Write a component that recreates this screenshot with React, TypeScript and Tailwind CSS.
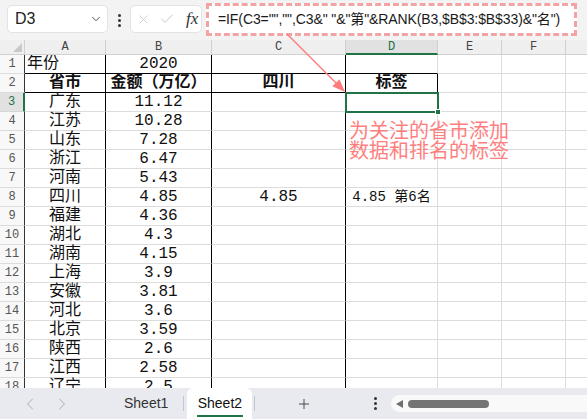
import React from 'react';
import { ChevronDown, ChevronLeft, ChevronRight, X, Check, Plus } from 'lucide-react';

const FORMULA = '=IF(C3="","",C3&" "&"第"&RANK(B3,$B$3:$B$33)&"名")';

type Row = {
  n: number;
  a?: string;
  b?: string;
  c?: string;
  d?: string;
  head?: boolean;
};

const rows: Row[] = [
  { n: 1, a: '年份', b: '2020' },
  { n: 2, a: '省市', b: '金额（万亿）', c: '四川', d: '标签', head: true },
  { n: 3, a: '广东', b: '11.12' },
  { n: 4, a: '江苏', b: '10.28' },
  { n: 5, a: '山东', b: '7.28' },
  { n: 6, a: '浙江', b: '6.47' },
  { n: 7, a: '河南', b: '5.43' },
  { n: 8, a: '四川', b: '4.85', c: '4.85', d: '4.85 第6名' },
  { n: 9, a: '福建', b: '4.36' },
  { n: 10, a: '湖北', b: '4.3' },
  { n: 11, a: '湖南', b: '4.15' },
  { n: 12, a: '上海', b: '3.9' },
  { n: 13, a: '安徽', b: '3.81' },
  { n: 14, a: '河北', b: '3.6' },
  { n: 15, a: '北京', b: '3.59' },
  { n: 16, a: '陕西', b: '2.6' },
  { n: 17, a: '江西', b: '2.58' },
  { n: 18, a: '辽宁', b: '2.5' },
];

type CellProps = {
  w: string;
  rb?: boolean;
  bb?: boolean;
  left?: boolean;
  bold?: boolean;
  extra?: string;
  children?: React.ReactNode;
};

const Cell = ({ w, rb, bb, left, bold, extra = '', children }: CellProps) => (
  <div
    className={`${w} shrink-0 h-full border-r border-b flex items-center whitespace-nowrap ${rb ? 'border-r-black' : 'border-r-[#dcdcdc]'} ${bb ? 'border-b-black' : 'border-b-[#dcdcdc]'} ${left ? 'justify-start pl-[2px]' : 'justify-center'} ${bold ? 'font-bold' : ''} ${extra}`}
  >
    {children}
  </div>
);

const colHeads = [
  { l: 'A', w: 'w-[81px]' },
  { l: 'B', w: 'w-[106px]' },
  { l: 'C', w: 'w-[134px]' },
  { l: 'D', w: 'w-[92px]' },
  { l: 'E', w: 'w-[64px]' },
  { l: 'F', w: 'w-[64px]' },
  { l: '', w: 'w-[64px]' },
];

const VDots = () => (
  <div className="flex flex-col items-center gap-[2px]">
    <span className="w-[3px] h-[3px] rounded-full bg-[#333]" />
    <span className="w-[3px] h-[3px] rounded-full bg-[#333]" />
    <span className="w-[3px] h-[3px] rounded-full bg-[#333]" />
  </div>
);

const App: React.FC = () => {
  return (
    <div className="w-[587px] h-[419px] relative overflow-hidden flex flex-col bg-white font-['Liberation_Mono','Noto_Sans_CJK_SC',monospace] text-[#111]">
      {/* formula bar */}
      <div className="h-[40px] shrink-0 bg-[#f3f3f3] flex items-start font-['Liberation_Sans','Noto_Sans_CJK_SC',sans-serif]">
        <div className="ml-[7px] mt-[5px] w-[101px] h-[28px] bg-white rounded-[5px] border border-[#e3e3e3] flex items-center justify-between pl-[7px] pr-[4px]">
          <span className="text-[16px] text-[#222]">D3</span>
          <ChevronDown size={14} strokeWidth={1.6} className="text-[#444]" />
        </div>
        <div className="w-[22px] mt-[14px] flex justify-center">
          <VDots />
        </div>
        <div className="mt-[5px] w-[72px] h-[28px] bg-white rounded-[5px] border border-[#e3e3e3] flex items-center pl-[5px] gap-[8px]">
          <X size={15} strokeWidth={1.2} className="text-[#c4c4c4]" />
          <Check size={16} strokeWidth={1.2} className="text-[#b8b8b8]" />
          <span className="ml-[3px] font-['Liberation_Serif',serif] italic text-[17px] text-[#333]">fx</span>
        </div>
        <div className="ml-[4px] mt-[3px] w-[371px] h-[33px] bg-white border-[3px] border-dashed border-[#f2a3a3] flex items-center pl-[9px] text-[14px] tracking-[-0.1px] text-[#1a1a1a] whitespace-nowrap overflow-hidden">
          {FORMULA}
        </div>
      </div>

      {/* column headers */}
      <div className="h-[15px] shrink-0 flex bg-[#efefef] text-[12px] text-[#444]">
        <div className="w-[25px] shrink-0 h-full border-r border-b border-[#d0d0d0] relative">
          <svg className="absolute right-[2px] bottom-[2px]" width="9" height="9" viewBox="0 0 9 9">
            <polygon points="9,0 9,9 0,9" fill="#c9c9c9" />
          </svg>
        </div>
        {colHeads.map((c, i) =>
          c.l === 'D' ? (
            <div key={i} className={`${c.w} shrink-0 h-full border-r border-[#d0d0d0] border-b-2 border-b-[#217346] bg-[#e1e1e1] flex items-center justify-center text-[#217346]`}>
              {c.l}
            </div>
          ) : (
            <div key={i} className={`${c.w} shrink-0 h-full border-r border-b border-[#d0d0d0] flex items-center justify-center`}>
              {c.l}
            </div>
          )
        )}
      </div>

      {/* grid */}
      <div className="flex-1 overflow-hidden text-[16px]">
        {rows.map((r) => {
          const top = r.n <= 2;
          return (
            <div key={r.n} className="flex h-[19px]">
              {r.n === 3 ? (
                <div className="w-[25px] shrink-0 h-full border-r-2 border-r-[#217346] border-b border-b-[#d6d6d6] bg-[#e1e1e1] flex items-center justify-center text-[12px] text-[#217346]">
                  {r.n}
                </div>
              ) : (
                <div className="w-[25px] shrink-0 h-full border-r border-r-[#333] border-b border-b-[#dcdcdc] bg-[#f8f8f8] flex items-center justify-center text-[12px] text-[#555]">
                  {r.n}
                </div>
              )}
              <Cell w="w-[81px]" rb bb={top} left={r.n === 1} bold={r.head}>
                {r.a}
              </Cell>
              <Cell w="w-[106px]" rb bb={top} bold={r.head}>
                {r.b}
              </Cell>
              <Cell w="w-[134px]" rb bb={top} bold={r.head}>
                {r.c}
              </Cell>
              {r.n === 3 ? (
                <Cell w="w-[92px]" extra="relative">
                  <div className="absolute z-10 -left-[1px] -top-[1px] w-[94px] h-[21px] border-2 border-[#217346]" />
                  <div className="absolute z-10 left-[89px] top-[16px] w-[6px] h-[6px] bg-[#217346] border border-white" />
                </Cell>
              ) : (
                <Cell w="w-[92px]" rb={r.n === 2} bb={top} bold={r.head} extra={r.n === 8 ? 'text-[14px]' : ''}>
                  {r.d}
                </Cell>
              )}
              <Cell w="w-[64px]" />
              <Cell w="w-[64px]" />
              <Cell w="w-[64px]" />
            </div>
          );
        })}
      </div>

      {/* sheet tabs */}
      <div className="h-[31px] shrink-0 bg-[#e8eaf0] flex items-center font-['Liberation_Sans','Noto_Sans_CJK_SC',sans-serif] text-[14px] text-[#333]">
        <ChevronLeft size={20} strokeWidth={1.1} className="ml-[20px] text-[#a3a6ad]" />
        <ChevronRight size={20} strokeWidth={1.1} className="ml-[12px] text-[#a3a6ad]" />
        <span className="ml-[52px]">Sheet1</span>
        <span className="ml-[15px] w-px h-[15px] bg-[#c3c6cc]" />
        <div className="ml-[3px] self-stretch w-[65px] bg-white rounded-t-[6px] flex flex-col items-center justify-center">
          <span className="text-[#111] mt-[2px]">Sheet2</span>
          <span className="mt-[1px] w-[46px] h-[2px] bg-[#217346]" />
        </div>
        <span className="ml-[2px] w-px h-[15px] bg-[#c3c6cc]" />
        <Plus size={16} strokeWidth={1.3} className="ml-[41px] text-[#333]" />
        <div className="ml-[62px]">
          <VDots />
        </div>
        <div className="ml-[14px] flex-1 h-[17px] bg-[#f9f9fa] rounded-l-full flex items-center pl-[5px]">
          <svg width="7" height="8" viewBox="0 0 7 8">
            <polygon points="7,0 7,8 0,4" fill="#6f6f6f" />
          </svg>
          <span className="ml-[5px] w-[81px] h-[8px] rounded-full bg-[#747474]" />
        </div>
      </div>

      {/* annotation arrow */}
      <svg className="absolute left-0 top-0 pointer-events-none" width="587" height="419" viewBox="0 0 587 419">
        <line x1="287" y1="34" x2="340" y2="87" stroke="#ff7c7c" strokeWidth="1.4" />
        <polygon points="345,92 332.3,86.2 339.5,79.2" fill="#ff7c7c" />
      </svg>

      {/* annotation text */}
      <div className="absolute left-[349px] top-[120px] text-[20px] leading-[20px] text-[#ff7f7f] font-['Noto_Sans_CJK_SC',sans-serif] pointer-events-none">
        <div>为关注的省市添加</div>
        <div>数据和排名的标签</div>
      </div>
    </div>
  );
};

export default App;
